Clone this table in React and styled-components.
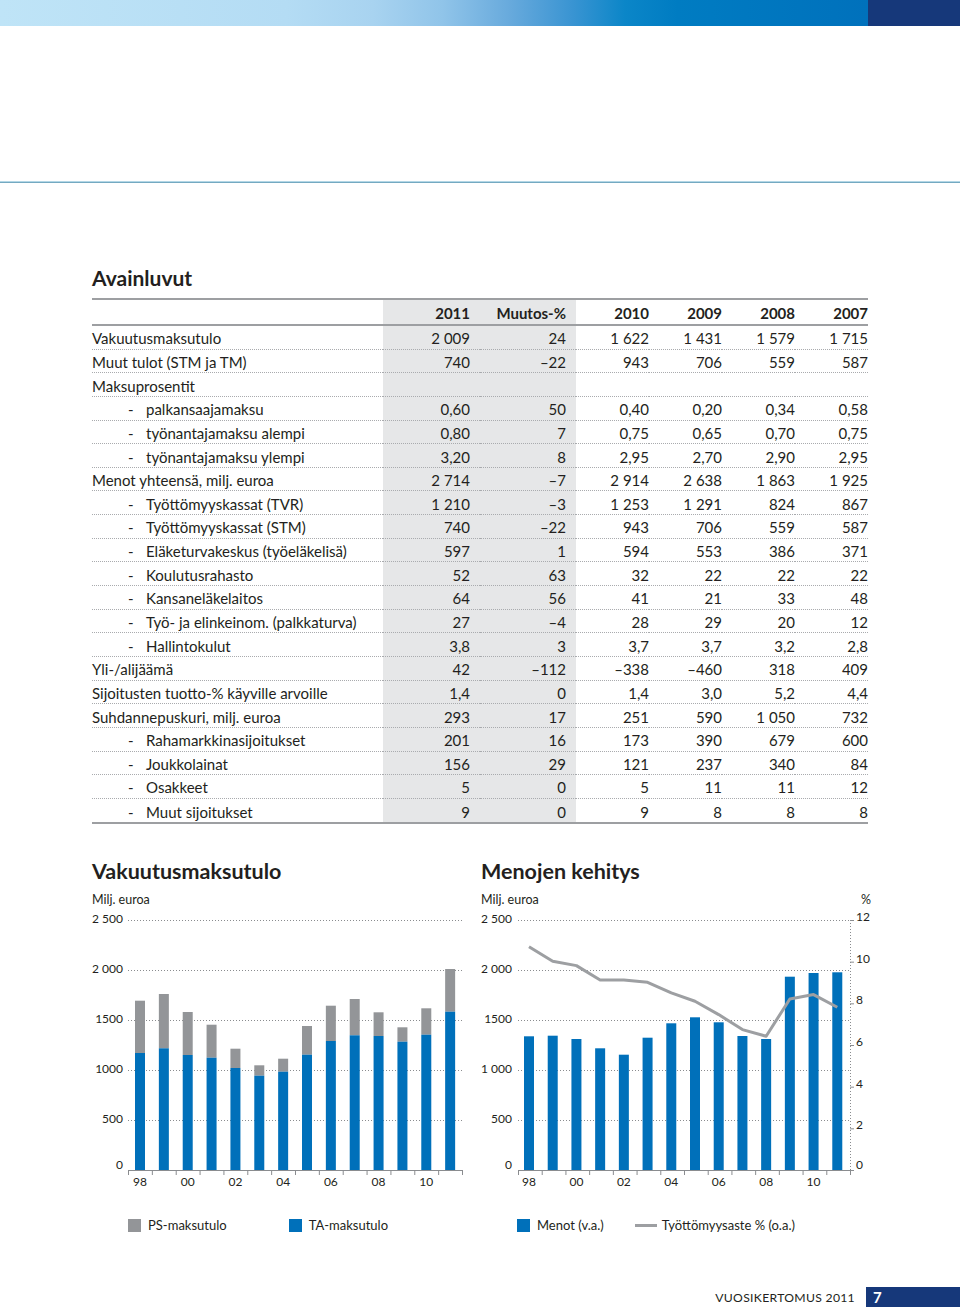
import React from "react";
import styled, { createGlobalStyle } from "styled-components";

const GlobalStyle = createGlobalStyle`
  html, body { margin: 0; padding: 0; background: #fff; }
  body { font-family: Lato, "Open Sans", sans-serif; color: #231f20; }
`;

const Page = styled.div`
  width: 960px;
  height: 1313px;
  position: relative;
  overflow: hidden;
  background: #fff;
`;

const TopBar = styled.div`
  display: flex;
  height: 26px;
  box-shadow: inset 0 -1px 0 rgba(0, 40, 80, 0.18);
`;

const Gradient = styled.div`
  flex: 1;
  background: linear-gradient(
    to right,
    #bfe4f7 0%,
    #b4dcf4 33%,
    #a8d3f0 43%,
    #90c4e9 51%,
    #66a9dc 59%,
    #3994d2 66%,
    #0b86c8 72%,
    #007cc2 78%,
    #0071bc 100%
  );
`;

const NavyBlock = styled.div`
  width: 92px;
  background: #16387a;
`;

const HeaderRule = styled.div`
  margin-top: 155px;
  height: 0;
  border-top: 1px solid #b3d7e6;
  border-bottom: 1px solid #74a9c1;
`;

const Content = styled.div`
  padding: 0 92px;
`;

const SectionTitle = styled.h2`
  margin: 83px 0 0;
  font-size: 21px;
  line-height: 24px;
  font-weight: 700;
`;

const Table = styled.div`
  margin-top: 8px;
  width: 776px;
  border-top: 2px solid #9d9fa2;
  border-bottom: 2px solid #9d9fa2;
  font-size: 15px;
`;

const Row = styled.div`
  display: grid;
  grid-template-columns: 291px 97px 96px 73px 73px 73px 73px;
  height: ${(p) => (p.$head ? "26px" : "23.65px")};
`;

const Cell = styled.div`
  box-sizing: border-box;
  display: flex;
  align-items: center;
  justify-content: ${(p) => (p.$label ? "flex-start" : "flex-end")};
  padding-right: ${(p) => (p.$shade ? "10px" : "0")};
  background: ${(p) => (p.$shade ? "#e6e7e8" : "transparent")};
  border-bottom: ${(p) =>
    p.$head ? "2px solid #9d9fa2" : p.$last ? "none" : "1px dotted #a9abae"};
  font-weight: ${(p) => (p.$head ? 700 : 400)};
  white-space: nowrap;
  padding-top: 2px;
`;

const Dash = styled.span`
  display: inline-block;
  width: 18px;
  margin-left: 36px;
`;

const ChartsRow = styled.div`
  display: flex;
  margin-top: 34px;
`;

const ChartPanel = styled.div`
  width: ${(p) => p.$w}px;
  flex-shrink: 0;
  display: flex;
  flex-direction: column;
`;

const ChartTitle = styled.h3`
  margin: 0;
  font-size: 21.5px;
  line-height: 26px;
  font-weight: 700;
`;

const UnitRow = styled.div`
  display: flex;
  justify-content: space-between;
  font-size: 12.5px;
  line-height: 12px;
  margin-top: 10px;
  padding-right: ${(p) => p.$pr || 0}px;
`;

const ChartSvg = styled.svg`
  display: block;
  font-family: Lato, "Open Sans", sans-serif;
  font-size: 12px;
`;

const Legend = styled.div`
  display: flex;
  align-items: center;
  gap: ${(p) => p.$gap}px;
  margin-top: 21px;
  padding-left: 36px;
  font-size: 13px;
  line-height: 16px;
`;

const LegendItem = styled.div`
  display: flex;
  align-items: center;
  gap: 7px;
`;

const Swatch = styled.span`
  width: 13px;
  height: 13px;
  background: ${(p) => p.$color};
`;

const LineSwatch = styled.span`
  width: 22px;
  height: 3px;
  background: #9d9fa2;
  margin-right: -2px;
`;

const Footer = styled.div`
  display: flex;
  justify-content: flex-end;
  align-items: center;
  margin-top: 54px;
  height: 20px;
`;

const FooterText = styled.span`
  font-size: 12.2px;
  letter-spacing: 0.3px;
  margin-right: 11px;
`;

const PageBox = styled.div`
  width: 94px;
  height: 20px;
  background: #16387a;
  color: #fff;
  font-weight: 700;
  font-size: 15px;
  display: flex;
  align-items: center;
  padding-left: 7px;
  box-sizing: border-box;
`;

const rows = [
  { label: "Vakuutusmaksutulo", v: ["2 009", "24", "1 622", "1 431", "1 579", "1 715"] },
  { label: "Muut tulot (STM ja TM)", v: ["740", "–22", "943", "706", "559", "587"] },
  { label: "Maksuprosentit", v: ["", "", "", "", "", ""] },
  { sub: true, label: "palkansaajamaksu", v: ["0,60", "50", "0,40", "0,20", "0,34", "0,58"] },
  { sub: true, label: "työnantajamaksu alempi", v: ["0,80", "7", "0,75", "0,65", "0,70", "0,75"] },
  { sub: true, label: "työnantajamaksu ylempi", v: ["3,20", "8", "2,95", "2,70", "2,90", "2,95"] },
  { label: "Menot yhteensä, milj. euroa", v: ["2 714", "–7", "2 914", "2 638", "1 863", "1 925"] },
  { sub: true, label: "Työttömyyskassat (TVR)", v: ["1 210", "–3", "1 253", "1 291", "824", "867"] },
  { sub: true, label: "Työttömyyskassat (STM)", v: ["740", "–22", "943", "706", "559", "587"] },
  { sub: true, label: "Eläketurvakeskus (työeläkelisä)", v: ["597", "1", "594", "553", "386", "371"] },
  { sub: true, label: "Koulutusrahasto", v: ["52", "63", "32", "22", "22", "22"] },
  { sub: true, label: "Kansaneläkelaitos", v: ["64", "56", "41", "21", "33", "48"] },
  { sub: true, label: "Työ- ja elinkeinom. (palkkaturva)", v: ["27", "–4", "28", "29", "20", "12"] },
  { sub: true, label: "Hallintokulut", v: ["3,8", "3", "3,7", "3,7", "3,2", "2,8"] },
  { label: "Yli-/alijäämä", v: ["42", "–112", "–338", "–460", "318", "409"] },
  { label: "Sijoitusten tuotto-% käyville arvoille", v: ["1,4", "0", "1,4", "3,0", "5,2", "4,4"] },
  { label: "Suhdannepuskuri, milj. euroa", v: ["293", "17", "251", "590", "1 050", "732"] },
  { sub: true, label: "Rahamarkkinasijoitukset", v: ["201", "16", "173", "390", "679", "600"] },
  { sub: true, label: "Joukkolainat", v: ["156", "29", "121", "237", "340", "84"] },
  { sub: true, label: "Osakkeet", v: ["5", "0", "5", "11", "11", "12"] },
  { sub: true, label: "Muut sijoitukset", v: ["9", "0", "9", "8", "8", "8"] },
];

const headers = ["2011", "Muutos-%", "2010", "2009", "2008", "2007"];

const BLUE = "#0070ba";
const GRAY = "#939598";
const GRID = "#8a8c8f";

// left chart: [ta (blue), total (gray top)]
const leftData = [
  [1170, 1693], [1217, 1760], [1150, 1580], [1123, 1453], [1020, 1213],
  [943, 1047], [983, 1113], [1153, 1440], [1290, 1643], [1347, 1710],
  [1340, 1577], [1283, 1427], [1353, 1617], [1583, 2010],
];

const rightBars = [1337, 1343, 1310, 1217, 1153, 1323, 1467, 1527, 1477, 1340, 1310, 1933, 1970, 1977];
const rightPct = [10.72, 10.02, 9.81, 9.12, 9.12, 9.01, 8.5, 8.1, 7.46, 6.74, 6.42, 8.21, 8.42, 7.81];

const yearLabels = ["98", "00", "02", "04", "06", "08", "10"];
const BASE = 264;
const yv = (v) => BASE - v * 0.1;
const yp = (p) => BASE - p * (250 / 12);
const leftTicks = [
  { v: 2500, t: "2 500" },
  { v: 2000, t: "2 000" },
  { v: 1500, t: "1500" },
  { v: 1000, t: "1000" },
  { v: 500, t: "500" },
];
const rightTicks = [
  { v: 2500, t: "2 500" },
  { v: 2000, t: "2 000" },
  { v: 1500, t: "1500" },
  { v: 1000, t: "1 000" },
  { v: 500, t: "500" },
];

function Axes({ x0, x1, ticks, labelX, slot }) {
  return (
    <g>
      {ticks.map((k) => (
        <g key={k.v}>
          <line x1={x0} x2={x1} y1={yv(k.v) + 0.5} y2={yv(k.v) + 0.5} stroke={GRID} strokeWidth="1" strokeDasharray="1 2" />
          <text x={labelX} y={yv(k.v) + 3} textAnchor="end" fill="#231f20">{k.t}</text>
        </g>
      ))}
      <text x={labelX} y={BASE - 1} textAnchor="end" fill="#231f20">0</text>
      <line x1={x0} x2={x1} y1={BASE + 0.5} y2={BASE + 0.5} stroke="#8a8c8f" strokeWidth="1" />
      {Array.from({ length: 15 }).map((_, i) => (
        <line key={i} x1={x0 + i * slot + 0.5} x2={x0 + i * slot + 0.5} y1={BASE} y2={BASE + 5} stroke="#8a8c8f" strokeWidth="1" />
      ))}
    </g>
  );
}

function LeftChart() {
  const x0 = 36, x1 = 370, slot = (x1 - x0) / 14;
  return (
    <ChartSvg width="378" height="290" viewBox="0 0 378 290">
      <Axes x0={x0} x1={x1} ticks={leftTicks} labelX={31} slot={slot} />
      {leftData.map(([ta, tot], i) => {
        const bx = x0 + i * slot + 7;
        return (
          <g key={i}>
            <rect x={bx} y={yv(tot)} width="10" height={yv(ta) - yv(tot)} fill={GRAY} />
            <rect x={bx} y={yv(ta)} width="10" height={BASE - yv(ta)} fill={BLUE} />
          </g>
        );
      })}
      {yearLabels.map((t, j) => (
        <text key={t} x={x0 + j * 2 * slot + 12} y={280} textAnchor="middle" fill="#231f20">{t}</text>
      ))}
    </ChartSvg>
  );
}

function RightChart() {
  const x0 = 37, x1 = 369, slot = (x1 - x0) / 14;
  const pts = rightPct.map((p, i) => `${x0 + i * slot + 11},${yp(p)}`).join(" ");
  return (
    <ChartSvg width="400" height="290" viewBox="0 0 400 290">
      <Axes x0={x0} x1={x1} ticks={rightTicks} labelX={31} slot={slot} />
      <line x1={x1 + 0.5} x2={x1 + 0.5} y1={yv(2500)} y2={BASE} stroke={GRID} strokeWidth="1" strokeDasharray="1 2" />
      {[0, 2, 4, 6, 8, 10, 12].map((p) => (
        <g key={p}>
          <line x1={x1} x2={x1 + 4} y1={yp(p) + 0.5} y2={yp(p) + 0.5} stroke={GRID} strokeWidth="1" />
          <text x={x1 + 6} y={p === 0 ? BASE - 1 : yp(p) + 1} fill="#231f20">{p}</text>
        </g>
      ))}
      {rightBars.map((v, i) => (
        <rect key={i} x={x0 + i * slot + 6} y={yv(v)} width="10" height={BASE - yv(v)} fill={BLUE} />
      ))}
      <polyline points={pts} fill="none" stroke="#9d9fa2" strokeWidth="3" strokeLinejoin="round" />
      {yearLabels.map((t, j) => (
        <text key={t} x={x0 + j * 2 * slot + 11} y={280} textAnchor="middle" fill="#231f20">{t}</text>
      ))}
    </ChartSvg>
  );
}

export default function App() {
  return (
    <Page>
      <GlobalStyle />
      <TopBar>
        <Gradient />
        <NavyBlock />
      </TopBar>
      <HeaderRule />
      <Content>
        <SectionTitle>Avainluvut</SectionTitle>
        <Table>
          <Row $head>
            <Cell $head $label />
            {headers.map((h, i) => (
              <Cell key={h} $head $shade={i < 2}>{h}</Cell>
            ))}
          </Row>
          {rows.map((r, ri) => {
            const last = ri === rows.length - 1;
            return (
              <Row key={ri}>
                <Cell $label $last={last}>
                  {r.sub && <Dash>-</Dash>}
                  {r.label}
                </Cell>
                {r.v.map((v, i) => (
                  <Cell key={i} $shade={i < 2} $last={last}>{v}</Cell>
                ))}
              </Row>
            );
          })}
        </Table>
        <ChartsRow>
          <ChartPanel $w={389}>
            <ChartTitle>Vakuutusmaksutulo</ChartTitle>
            <UnitRow>
              <span>Milj. euroa</span>
            </UnitRow>
            <LeftChart />
            <Legend $gap={62}>
              <LegendItem>
                <Swatch $color={GRAY} />
                PS-maksutulo
              </LegendItem>
              <LegendItem>
                <Swatch $color={BLUE} />
                TA-maksutulo
              </LegendItem>
            </Legend>
          </ChartPanel>
          <ChartPanel $w={400}>
            <ChartTitle>Menojen kehitys</ChartTitle>
            <UnitRow $pr={10}>
              <span>Milj. euroa</span>
              <span>%</span>
            </UnitRow>
            <RightChart />
            <Legend $gap={31}>
              <LegendItem>
                <Swatch $color={BLUE} />
                Menot (v.a.)
              </LegendItem>
              <LegendItem>
                <LineSwatch />
                Työttömyysaste % (o.a.)
              </LegendItem>
            </Legend>
          </ChartPanel>
        </ChartsRow>
      </Content>
      <Footer>
        <FooterText>VUOSIKERTOMUS 2011</FooterText>
        <PageBox>7</PageBox>
      </Footer>
    </Page>
  );
}
